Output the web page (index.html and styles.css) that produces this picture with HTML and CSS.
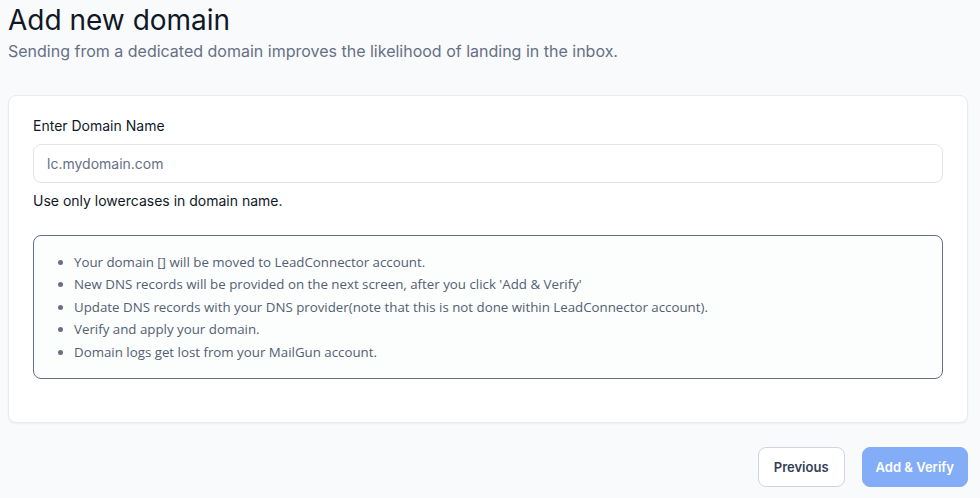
FILE: index.html
```html
<!DOCTYPE html>
<html lang="en">
<head>
<meta charset="utf-8">
<title>Add new domain</title>
<link rel="stylesheet" href="styles.css">
</head>
<body>
<main class="page">
  <header class="head">
    <h1 class="title">Add new domain</h1>
    <p class="subtitle">Sending from a dedicated domain improves the likelihood of landing in the inbox.</p>
  </header>
  <section class="card">
    <label class="label" for="domain">Enter Domain Name</label>
    <input class="input" id="domain" type="text" placeholder="lc.mydomain.com">
    <p class="help">Use only lowercases in domain name.</p>
    <div class="info">
      <ul class="info-list">
        <li>Your domain [] will be moved to LeadConnector account.</li>
        <li>New DNS records will be provided on the next screen, after you click 'Add &amp; Verify'</li>
        <li>Update DNS records with your DNS provider(note that this is not done within LeadConnector account).</li>
        <li>Verify and apply your domain.</li>
        <li>Domain logs get lost from your MailGun account.</li>
      </ul>
    </div>
  </section>
  <footer class="actions">
    <button class="btn btn-secondary" type="button">Previous</button>
    <button class="btn btn-primary" type="button" disabled>Add &amp; Verify</button>
  </footer>
</main>
</body>
</html>
```
FILE: styles.css
```css
* { box-sizing: border-box; }
html, body { margin: 0; padding: 0; }
body {
  background: #f9fafb;
  font-family: Inter, "Liberation Sans", sans-serif;
  color: #101828;
}
.page {
  width: 960px;
  margin-left: 8px;
}
.head { padding-top: 1px; }
.title {
  margin: 0;
  font-size: 28px;
  line-height: 38px;
  font-weight: 400;
  color: #101828;
}
.subtitle {
  margin: 0;
  font-size: 16px;
  line-height: 24px;
  color: #667085;
}
.card {
  margin-top: 32px;
  background: #fff;
  border: 1px solid #e8eaef;
  border-radius: 8px;
  box-shadow: 0 1px 2px rgba(16, 24, 40, 0.05);
  padding: 20px 24px 43px;
  display: flex;
  flex-direction: column;
}
.label {
  font-size: 14px;
  line-height: 20px;
  font-weight: 400;
  color: #101828;
}
.input {
  margin-top: 8px;
  height: 39px;
  width: 100%;
  border: 1px solid #e1e3e8;
  border-radius: 8px;
  padding: 0 13px;
  font-family: Inter, "Liberation Sans", sans-serif;
  font-size: 14px;
  color: #101828;
  background: #fff;
  outline: none;
}
.input::placeholder { color: #667085; }
.help {
  margin: 8px 0 0;
  font-size: 14px;
  line-height: 20px;
  color: #101828;
}
.info {
  margin-top: 24px;
  border: 1px solid #667085;
  border-radius: 8px;
  background: #fcfdfd;
  padding: 15px 24px 15px 0;
}
.info-list {
  margin: 0;
  padding-left: 40px;
  font-family: "Open Sans", "Noto Sans", sans-serif;
  font-size: 13.3px;
  line-height: 22.4px;
  color: #535f73;
}
.info-list li::marker { color: #667085; }
.actions {
  margin-top: 24px;
  display: flex;
  justify-content: flex-end;
  gap: 17px;
}
.btn {
  height: 40px;
  border-radius: 8px;
  font-family: Inter, "Liberation Sans", sans-serif;
  font-size: 13px;
  font-weight: 600;
  cursor: pointer;
}
.btn-secondary {
  background: #fff;
  border: 1px solid #d0d5dd;
  color: #344054;
  padding: 0 15px;
}
.btn-primary {
  background: #84adf8;
  border: 1px solid #84adf8;
  color: #fff;
  padding: 0 13px;
}
```
